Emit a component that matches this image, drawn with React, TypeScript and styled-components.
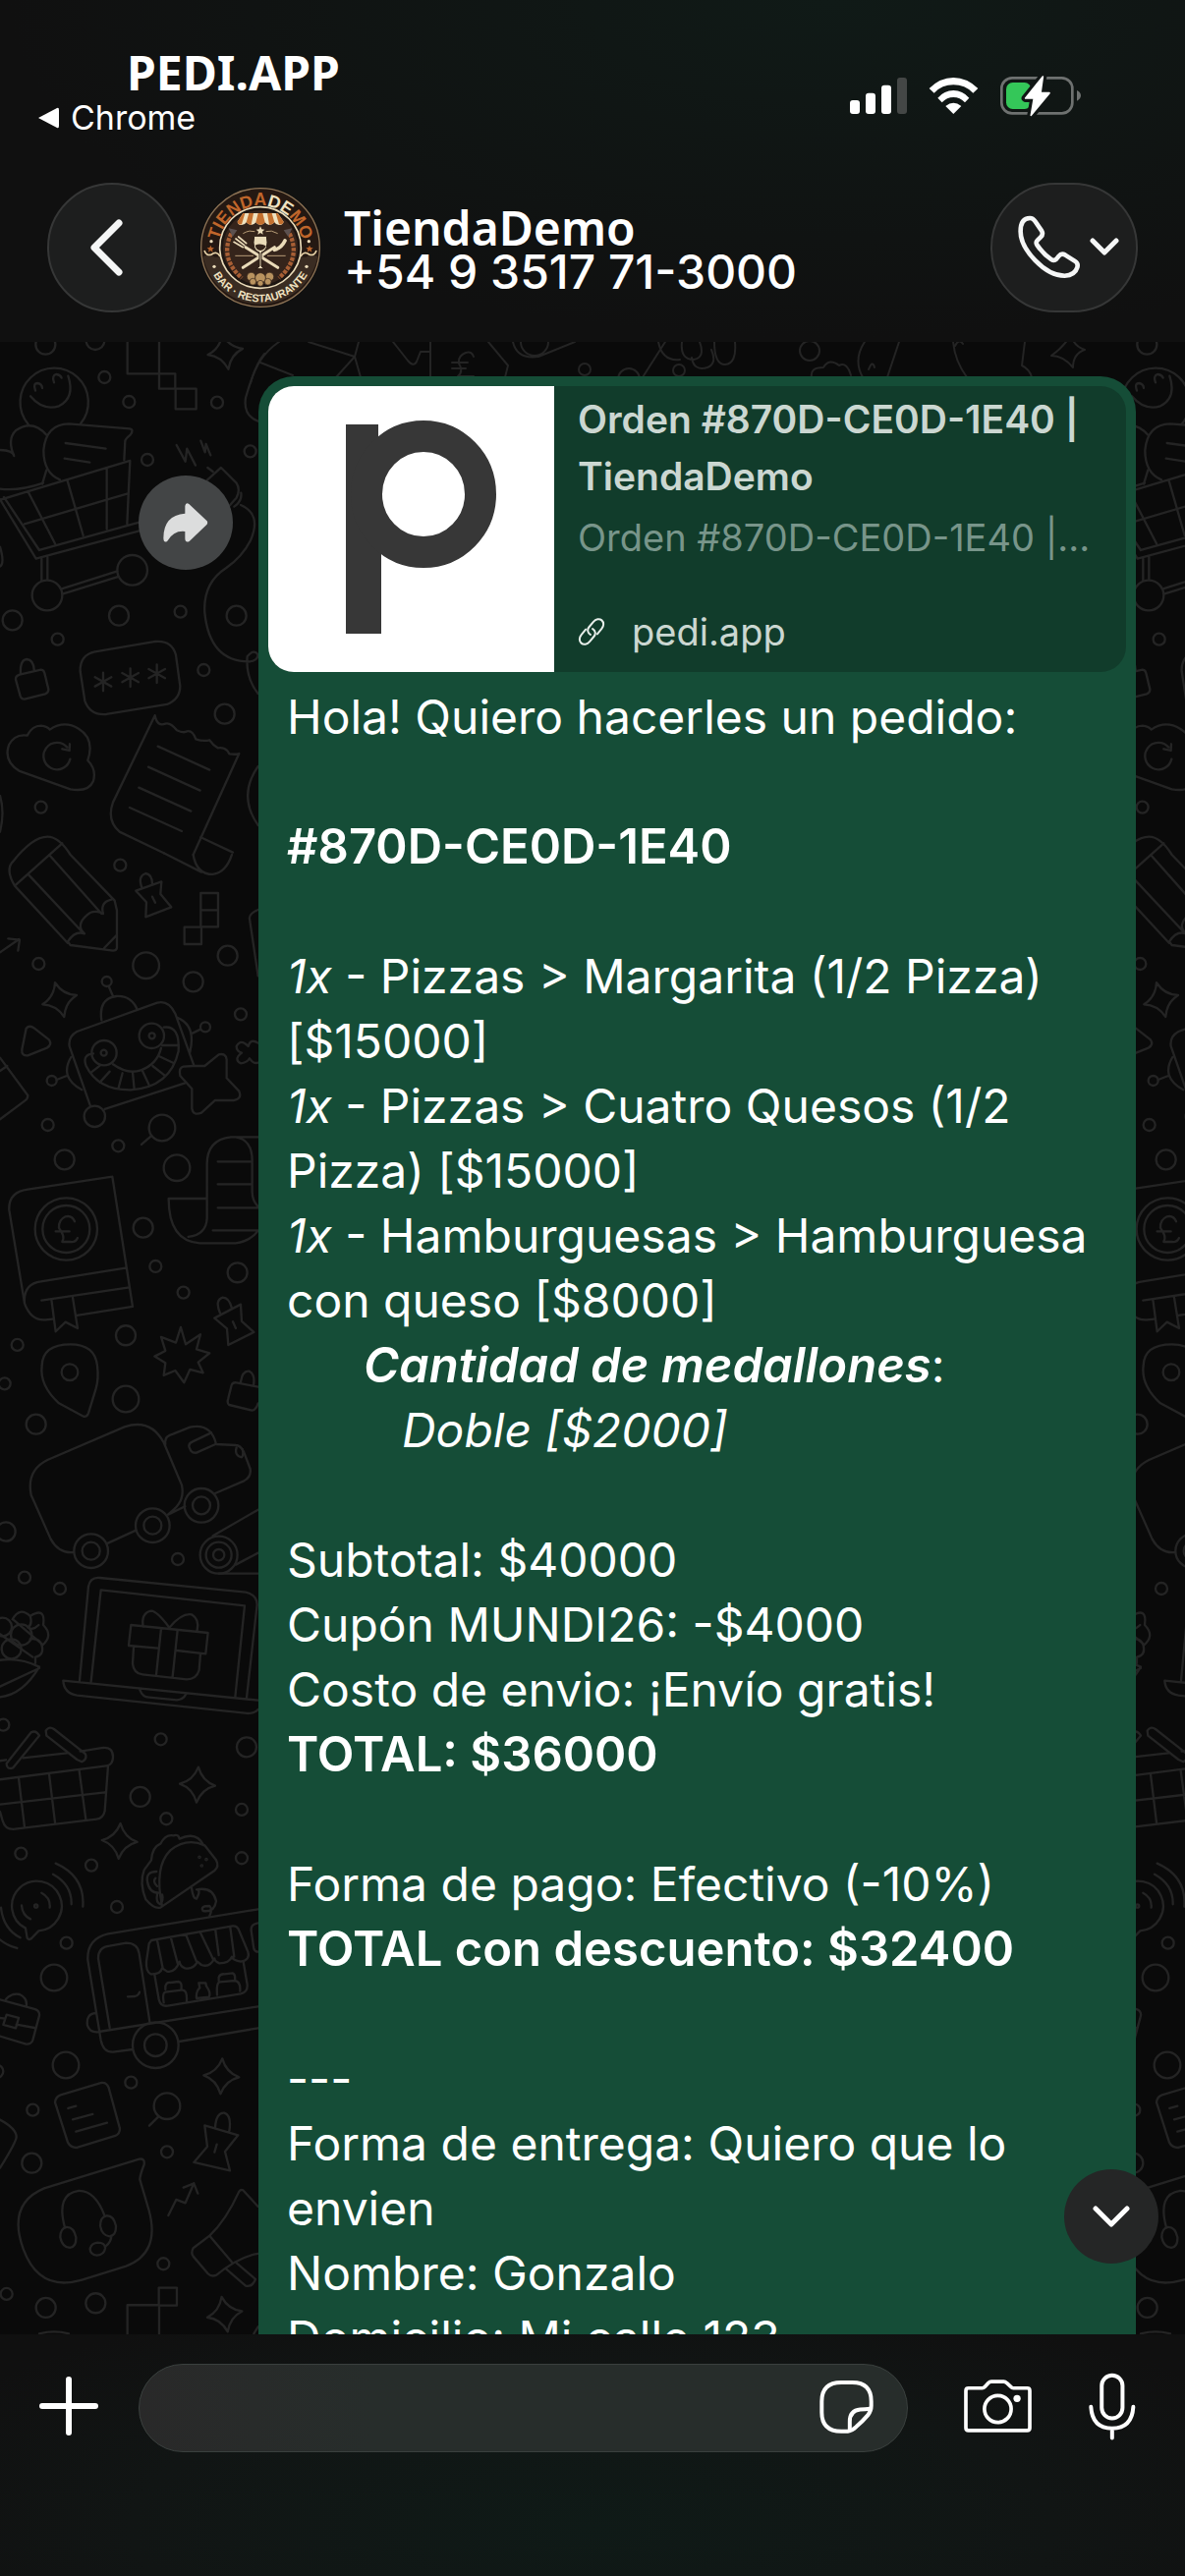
import React from "react";
import styled, { createGlobalStyle } from "styled-components";

const GlobalStyle = createGlobalStyle`
    *{
        box-sizing:border-box;
    }
    body{
        margin:0;
        background:#101111;
        font-family:Inter, "Liberation Sans", sans-serif;
        color:#fff;
    }
    button{
        border:0;
        padding:0;
        background:transparent;
        color:inherit;
        cursor:pointer;
        display:flex;
        align-items:center;
        justify-content:center;
        flex:none;
    }
    svg{
        display:block;
        flex:none;
    }
`;

type Circle = [number, number, number];
type Spot = [number, number, number];

interface DoodleBlock {
    top: number;
    circles: Circle[];
    sparkles: Spot[];
    paths: string[];
}

// line drawings of the chat wallpaper, three units to a pixel
const doodles: DoodleBlock[] = [
    {
        top: 2,
        circles: [
            [139, 2, 30], [291, -10, 28], [319, 102, 18], [394, 177, 18], [663, 179, 18], [764, 328, 18],
            [450, 354, 18], [38, 844, 30], [176, 902, 18], [363, 830, 30], [551, 818, 18], [722, 830, 30],
            [622, 996, 18], [686, 1130, 30], [125, 1415, 18], [144, 768, 46], [404, 691, 46],
        ],
        sparkles: [[688, 24, -10]],
        paths: [
            // stairs
            "M389-8V91H486V-8M486 91H535V137H486ZM536 137H599V199H536Z",
            // smiley
            "M86 245A104 104 0 1 1 246 244M93 160Q130 205 180 190Q230 165 208 98M108 143Q100 120 115 120Q128 122 129 135M165 118Q157 97 172 93Q185 95 188 104",
            // heart and note
            "M0 324Q40 325 43 342Q20 290 50 263Q100 230 142 278M0 443Q60 450 132 425M142 385L129 428",
            "M183 415Q133 395 133 325Q140 245 210 244L396 259Q410 262 398 278Q383 290 382 297L379 355M200 303L323 320M197 350L274 362",
            // shopping cart
            "M-5 478L397 357L388 550M12 468L120 630L425 545M0 475L110 656L425 571M85 450L168 610M206 418L254 585M326 380V565M75 550L390 457M127 655V722M145 652V720M188 748L358 694M193 763L362 711",
            // plug
            "M539 309L566 359L571 320L597 371M613 296L626 331L629 306L643 340",
            "M634 378L650 390M632 417L675 378L722 425Q735 445 722 470L700 495M736 455Q740 480 715 497M735 492Q800 520 765 600Q740 650 690 685Q620 730 625 820Q640 970 760 970Q785 970 788 950Q775 930 755 955Q750 1020 788 1068",
            // lock
            "M63 1008Q60 965 82 963Q102 965 104 995M60 1010L125 995Q133 995 136 1005L148 1055Q148 1065 138 1069L75 1085Q66 1086 62 1076L48 1025Q47 1014 60 1010Z",
            // password card
            "M290 940L475 909Q525 905 537 950L550 1045Q550 1085 510 1101L325 1131Q275 1135 259 1090L245 1000Q243 950 290 940Z",
            "M315 1004V1060M290 1018L340 1046M340 1018L290 1046M398 991V1047M373 1005L423 1033M423 1005L373 1033M479 979V1035M454 993L504 1021M504 993L454 1021",
            // cloud
            "M83 1196Q98 1166 125 1166Q145 1168 152 1178Q195 1148 240 1175Q290 1205 268 1272Q295 1300 285 1335Q270 1370 215 1360L60 1305Q10 1275 27 1225Q45 1190 83 1196ZM214 1268A41 41 0 1 1 205 1232M190 1237L212 1242L213 1222",
            // receipt
            "M473 1135L345 1400Q325 1455 365 1490L500 1555M473 1135Q480 1170 505 1160Q520 1155 540 1180Q560 1190 572 1183Q588 1180 598 1207Q620 1215 640 1210Q650 1225 665 1234Q690 1230 700 1252Q720 1255 730 1251L590 1560",
            "M482 1229L640 1301M453 1292L611 1364M424 1355L583 1427M396 1416L555 1488M613 1507L711 1553M500 1555L615 1613M590 1560Q600 1620 650 1620Q690 1615 708 1560",
            "M808 30Q780 60 750 165Q742 220 790 237M788 1290Q725 1380 788 1470M0 1380Q15 1430 0 1490M0 620Q15 670 0 680",
        ],
    },
    {
        top: 522,
        circles: [
            [367, 32, 18], [118, 333, 18], [446, 338, 40], [695, 308, 30], [590, 388, 30], [735, 487, 18],
            [326, 387, 15], [627, 526, 15], [158, 690, 15], [146, 825, 18], [361, 889, 18], [197, 931, 30],
            [495, 834, 40], [540, 956, 40], [437, 1139, 30], [475, 1257, 18], [560, 1337, 18], [725, 1276, 30],
            [384, 1468, 30], [53, 1497, 18], [289, 799, 32], [318, 605, 38], [463, 553, 38], [317, 605, 9],
            [464, 553, 9], [202, 1143, 95], [202, 1143, 72],
        ],
        sparkles: [[182, 443, -15]],
        paths: [
            // pencil
            "M45 95Q15 45 40 20Q100-55 145-55Q180-55 215 0L350 140L357 170V285Q355 293 345 293L215 276L207 265Q230 230 258 241Q230 215 265 185Q285 165 315 180Q305 145 340 137M207 270L45 95L190-35M88 62L255 240M150 0L310 180M318 285L357 245",
            "M0 298L58 258M25 256L60 260L55 293",
            // push pins
            "M415 110L493 82L490 120L523 160L445 190L447 145ZM433 100Q420 65 445 57Q465 60 465 90M465 128L474 146",
            "M655 1415L735 1373L738 1425L775 1458L697 1497L693 1447ZM672 1400Q655 1360 680 1352Q700 1352 708 1385M711 1426L720 1446",
            "M613 117H666V220H613ZM613 169H666M563 221H615V273H563Z",
            "M80 530Q90 518 105 530L150 565Q160 580 143 590L85 613Q65 615 67 595Z",
            "M0 620L85 735Q85 745 75 752L0 808M0 660L22 645",
            // robot
            "M275 765L212 585Q208 555 235 540L480 452Q515 443 535 485L592 643M320 777L565 697M310 505Q300 440 355 432Q400 430 418 470M345 432L332 402M540 497Q600 520 580 603M588 545L612 533M217 618Q180 680 250 718M204 675L173 687",
            "M285 607Q250 610 263 645Q300 720 400 718Q520 710 545 600Q550 520 500 527M345 640Q390 672 430 658Q480 640 492 590",
            "M278 665L306 643M305 695L335 662M362 712L374 667M410 716L405 664M455 703L435 660M503 674L466 645M530 636L485 615M545 582H495",
            // star and flower
            "M590 645L625 645L668 610Q690 605 692 625V682L730 722Q740 745 715 750H657L615 788Q590 798 586 775V715L550 675Q545 650 560 647Z",
            "M788 575Q765 560 758 585Q735 560 722 585Q722 600 738 605Q712 625 735 637Q755 635 762 622Q775 640 788 635M432 885L463 858",
            // scroll
            "M788 862H705Q632 870 632 945V1110Q630 1160 575 1167M632 1050H515Q515 1180 610 1186H720Q765 1180 788 1148M720 862Q772 870 770 940V1030Q770 1055 788 1075M665 937H768M665 1006H768M665 1078H788M650 1147H788M788 168Q760 180 762 195L788 370",
            // book
            "M343 983L85 1022Q25 1030 28 1085L75 1370Q95 1425 140 1420L160 1418M343 983L405 1380L235 1407M75 1370Q70 1310 125 1303L383 1262M127 1361L395 1321M157 1358L170 1456L200 1427L237 1446L222 1352",
            "M228 1120Q220 1100 200 1105Q178 1115 180 1140Q200 1165 190 1182H215Q230 1185 237 1170M170 1150H212",
            // burst
            "M552 1443L567 1495L612 1465L600 1510L640 1522L605 1550L620 1582L580 1572L562 1612L535 1575L500 1590L505 1552L472 1532L505 1515L492 1473L537 1490Z",
        ],
    },
    {
        top: 1042,
        circles: [
            [14, 55, 18], [384, 102, 40], [110, 179, 30], [18, 507, 29], [75, 647, 18], [183, 681, 18],
            [543, 591, 18], [491, 1141, 18], [753, 1165, 30], [428, 1317, 30], [508, 1384, 18], [738, 1356, 18],
            [64, 1490, 18], [279, 1526, 18], [738, 1504, 18], [10, 1097, 18], [278, 566, 52], [278, 566, 27],
            [466, 488, 52], [466, 488, 27], [615, 427, 52], [615, 427, 27], [668, 578, 57], [668, 578, 39],
            [668, 578, 17], [213, 20, 25], [65, 822, 32], [35, 865, 30], [8, 798, 28],
        ],
        sparkles: [[603, 1280, 3], [365, 1452, 3]],
        paths: [
            // map pin
            "M128 0Q130-65 215-65Q290-65 297 0Q302 40 293 70L270 145Q265 158 255 155L180 115Q120 60 128 0Z",
            "M700 120Q692 115 697 100L707 60Q710 50 722 52L788 65M700 120L770 137Q782 135 788 115M735 50Q740 15 760 17Q780 25 774 62",
            // van
            "M225 570Q180 575 155 530L95 395Q80 320 145 288L380 187Q460 160 500 235L555 365Q565 410 530 440L513 455M505 240Q500 215 530 208L580 188Q645 175 660 240L720 243Q735 243 745 265L764 315Q768 340 745 352L657 390M330 542L415 503M513 455L565 430",
            "M645 205L588 232Q574 238 578 250L583 260Q590 268 600 266L658 240M722 250Q715 275 738 280Q745 272 740 255M650 520L788 440M720 608L788 572M668 635H788",
            // laptop with a gift
            "M243 962L270 675Q275 645 305 648L750 692Q785 700 785 730L753 1015M278 965L308 685L747 733L718 1013M788 1022L193 962Q195 1000 235 1007L755 1062Q780 1062 788 1050M427 990Q435 1013 455 1013L540 1021Q560 1020 568 1003",
            "M540 870L628 880L635 816L400 792L393 855L483 863M408 860L405 910Q408 940 435 943L570 958Q600 958 608 930L612 880M492 803L477 945M542 808L527 950M517 800Q480 750 462 749Q430 755 437 797M517 800Q555 755 585 760Q610 775 602 808",
            // corn
            "M38 775Q60 735 92 765Q140 735 132 792Q165 825 128 855Q135 885 108 890V908M92 765Q100 790 85 800Q100 810 118 792M128 855Q120 830 92 835M-5 900Q60 890 120 920Q70 1005 0 1012M0 980L120 924M0 820L100 890M40 775L128 850",
            // basket
            "M20 1215L95 1120Q110 1112 120 1130L40 1228Q20 1235 20 1215ZM140 1115Q150 1100 165 1110L260 1185Q268 1200 250 1210L235 1203L142 1130Z",
            "M0 1207L18 1204M70 1198L205 1183M245 1178L315 1167Q345 1165 345 1195Q345 1220 325 1222L0 1264M330 1222L320 1360Q315 1383 295 1385L40 1416Q15 1416 8 1390L0 1362M0 1340L320 1303M57 1260L75 1410M150 1248L168 1395M242 1237L262 1385",
        ],
    },
    {
        top: 1532,
        circles: [
            [357, 183, 18], [203, 293, 18], [165, 399, 40], [201, 666, 40], [400, 719, 18], [100, 803, 18],
            [97, 965, 30], [510, 791, 40], [510, 931, 18], [499, 1273, 18], [20, 1365, 18], [140, 1407, 30],
            [292, 1393, 30], [475, 605, 70], [475, 605, 34], [-10, 685, 20], [110, 180, 5], [609, 31, 2],
            [630, 38, 2], [616, 57, 2],
        ],
        sparkles: [[676, 700, 3], [686, 1427, -10]],
        paths: [
            // taco
            "M495 180Q470 60 520 10Q570-30 625-5L660 40Q670 60 655 72L490 185Q470 190 445 160Q425 110 440 70L462 40Q465 0 490-10Q505-40 530-35Q545-40 548-25Q600-50 622-5M478 75Q445 75 450 105Q455 140 485 140M475 95Q465 105 480 120M480 145Q475 170 490 175Q500 160 495 145",
            "M585 125Q590 160 600 158Q615 130 600 130Q650 120 660 165Q655 200 620 195Q610 180 640 180Q650 190 640 210",
            // ringing call
            "M78 248A76 76 0 1 1 118 256L95 280Q88 285 83 278ZM66 178Q68 208 93 220M127 140Q155 155 152 185M162 83Q220 115 218 175M170 50Q260 90 253 182M3 185Q10 250 62 277M0 283Q20 300 52 309",
            // food truck
            "M788 190L330 265Q265 280 268 345L308 590Q315 627 345 626L405 618M547 594L788 553M302 564L788 487M335 552L300 340Q300 305 335 302L385 293Q420 293 425 325L457 533M390 457L412 456Q424 452 426 443M292 507Q262 510 267 545Q275 568 300 565",
            "M462 285L710 241Q725 240 730 255L757 320Q765 345 735 350Q710 345 708 335Q700 355 670 355Q655 350 655 340Q640 370 615 360L603 350Q590 375 565 370Q550 365 548 350Q535 385 510 380L495 370Q490 390 460 388Q445 380 447 350L455 295ZM480 285L497 370M522 278L543 358M568 268L600 350M612 262L652 345M658 255L668 330M703 245L715 335",
            "M472 390L485 465Q490 488 512 485L735 448Q757 443 755 420L743 350M505 435V425Q508 412 520 414L545 411Q557 412 553 437L505 443Q495 445 500 475M555 437Q572 435 570 470M607 415H628L630 425Q645 445 638 458L600 462Q598 440 610 430ZM668 408V398Q672 387 685 388L710 385Q720 388 717 408L672 412Q660 412 663 452M717 408Q735 410 733 440M788 232Q765 235 767 255L775 310Q778 320 788 320",
            // briefcase
            "M0 466L105 495Q122 500 120 515L100 590Q95 603 80 602L0 578M18 465Q35 445 60 450Q85 462 80 487M0 522L15 524M50 542L105 552M20 512L57 522L48 553L10 543Z",
            // note
            "M185 757L310 720Q325 718 332 735L366 860Q366 875 352 882L235 918Q215 918 207 902L168 780Q170 762 185 757ZM208 798L232 791M222 832L283 816M232 869L327 842M456 851L484 823",
            "M625 850L727 880L687 930L702 988L592 963L633 915ZM657 857Q660 810 685 812Q708 820 700 868M662 908L655 932M0 833Q50 860 50 885Q50 900 0 980",
            // headset bubble
            "M135 1042L425 953Q443 950 440 970Q428 1000 427 1015L455 1110Q490 1240 385 1280L250 1322Q120 1360 72 1230Q20 1090 135 1042ZM198 1162Q170 1060 240 1050Q290 1048 320 1127M340 1187Q340 1205 322 1220",
            "M203 1161Q225 1160 232 1192Q233 1222 213 1224Q190 1222 184 1192Q184 1165 203 1161ZM325 1126Q347 1125 354 1157Q355 1187 335 1189Q312 1187 306 1157Q306 1130 325 1126ZM298 1208Q322 1208 321 1226Q318 1245 296 1247Q275 1245 275 1228Q278 1210 298 1208Z",
            "M514 1125L538 1077L566 1087L592 1027M560 1040L592 1027L604 1058",
            // megaphone
            "M788 1098L742 1048Q735 1045 730 1052Q690 1140 640 1187L590 1225Q582 1240 590 1250L635 1303Q645 1313 660 1308Q730 1250 788 1242M640 1187L708 1268M692 1290L750 1340Q770 1345 780 1320L722 1270",
            "M485 1346H540V1400H485ZM389 1490V1399H486V1490M120 1486Q165 1475 210 1486M775 1486L788 1465",
        ],
    },
];

// the row that shows between the header and the bubble, in pixels
const topRow =
    "M284 0Q262 15 255 42M265 21L298 34M314 0L361 15L365 0M342 36L361 15L367 36M400 0L415 19Q421 26 424 20L428 10H438M438 0V36M482 15Q480 9 474 11Q466 14 467 22Q472 30 466 35H482M460 21H476M460 27H474M497 0L517 24L514 36M530 0A14 14 0 0 0 558 0M522 0Q526 18 548 15L585 0M677 0L654 36M670 0Q674 20 692 18M694 0Q692 18 706 18Q718 16 712 0M704 16Q706 30 720 26Q730 22 724 8M727 0Q727 23 738 23Q750 22 748 0M826 36Q824 26 838 26Q844 16 854 24Q862 20 866 34M880 0Q868 18 878 36M884 28Q888 18 890 26M915 0L903 36M972 4Q976 -4 980 2M970 0Q972 20 984 36M1043 0L1040 24Q1048 28 1050 36";

const Wallpaper: React.FC = () => (
    <Backdrop aria-hidden="true">
        <defs>
            <g id="strip" fill="none" stroke="#242424" strokeWidth="7" strokeLinecap="round" strokeLinejoin="round">
                {doodles.map((block) => (
                    <g key={block.top} transform={`translate(0 ${block.top}) scale(0.3333)`}>
                        {block.circles.map(([x, y, r]) => (
                            <circle key={`${x}-${y}-${r}`} cx={x} cy={y} r={r} />
                        ))}
                        {block.sparkles.map(([x, y, turn]) => (
                            <path
                                key={`${x}-${y}`}
                                transform={`translate(${x} ${y}) rotate(${turn})`}
                                d="M0-54Q14-12 54 0Q14 12 0 54Q-14 12-54 0Q-14-12 0-54Z"
                            />
                        ))}
                        {block.paths.map((d) => (
                            <path key={d} d={d} />
                        ))}
                    </g>
                ))}
            </g>
        </defs>
        <use href="#strip" />
        <use href="#strip" x="1121" />
        <g fill="none" stroke="#242424" strokeWidth="2" strokeLinecap="round" strokeLinejoin="round">
            <path d={topRow} />
            <path d="M1090-8Q1092 4 1104 8Q1092 12 1092 26Q1082 14 1070 14Q1084 4 1090-8Z" />
            <circle cx="595" cy="28" r="6" />
            <circle cx="640" cy="38" r="11" />
            <circle cx="691" cy="29" r="6" />
            <circle cx="824" cy="9" r="10" />
        </g>
    </Backdrop>
);

const StoreLogo: React.FC = () => (
    <svg width="122" height="122" viewBox="74 60 366 366" role="img" aria-label="TiendaDemo">
        <defs>
            <path id="arcTop" d="M98 290A131 131 0 1 1 416 290" />
            <path id="arcBottom" d="M91 243A166 166 0 0 0 423 243" />
        </defs>
        <circle cx="257" cy="243" r="181" fill="#241812" stroke="#8d7355" strokeWidth="4" />
        <path d="M82 270Q105 262 118 272H396Q410 262 432 270A178 178 0 0 1 82 270Z" fill="#3a2c22" />
        <path d="M86 252Q92 270 108 264Q124 252 134 270M428 252Q422 270 406 264Q390 252 380 270" fill="none" stroke="#e8d3a8" strokeWidth="5" />
        <circle cx="257" cy="243" r="124" fill="#1d1511" stroke="#eadbb9" strokeWidth="5" />
        <circle cx="257" cy="243" r="114" fill="#35241b" />
        <text fontFamily="Liberation Sans, sans-serif" fontWeight="700" fontSize="53" fill="#c0662b" textAnchor="middle">
            <textPath href="#arcUpper" startOffset="50%">
                TIENDA<tspan fill="#f0e2c0">DE</tspan>MO
            </textPath>
        </text>
        <path id="arcUpper" d="M133 275A128 128 0 1 1 381 275" fill="none" />
        <text fontFamily="Liberation Sans, sans-serif" fontWeight="700" fontSize="33" fill="#f0e2c0" textAnchor="middle">
            <textPath href="#arcBottom" startOffset="50%">BAR · RESTAURANTE</textPath>
        </text>
        <g fill="#eadbb9">
            <circle cx="107" cy="224" r="5" />
            <circle cx="405" cy="224" r="5" />
            <circle cx="116" cy="301" r="5" />
            <circle cx="398" cy="301" r="5" />
            <path d="M257 178L261 187L270 188L263 194L265 203L257 198L249 203L251 194L244 188L253 187Z" />
        </g>
        <g fill="#b9622a">
            <path d="M105 236L108 243L116 244L110 249L112 257L105 252L98 257L100 249L94 244L102 243Z" />
            <path d="M407 236L410 243L418 244L412 249L414 257L407 252L400 257L402 249L396 244L404 243Z" />
        </g>
        {/* awning */}
        <path d="M204 138H310L328 164Q326 174 314 174Q304 174 300 166Q294 174 284 174Q276 174 271 166Q266 174 257 174Q248 174 243 166Q238 174 229 174Q220 174 214 166Q210 174 200 174Q188 174 187 164Z" fill="#f0e2c0" />
        <path d="M222 138H236L229 174Q220 174 214 166ZM250 138H264L271 166Q266 174 257 174Q248 174 243 166ZM278 138H292L300 166Q294 174 284 174ZM204 138L187 164Q188 174 200 172L210 138ZM310 138L328 164Q326 174 314 172L304 138Z" fill="#c4702f" />
        {/* wheat */}
        <g fill="none" stroke="#a85f35" strokeWidth="13" strokeDasharray="11 4">
            <path d="M168 200Q132 275 200 336" />
            <path d="M346 200Q382 275 314 336" />
        </g>
        <path d="M160 184L186 190L172 210ZM354 184L328 190L342 210Z" fill="#5c5150" />
        <path d="M204 200Q225 188 240 194M310 200Q290 188 274 194M180 268H236M334 268H278" fill="none" stroke="#b79c77" strokeWidth="3" />
        {/* cutlery and glass */}
        <g stroke="#eadbb9" strokeLinecap="round" fill="none">
            <path d="M212 242L310 304" strokeWidth="9" />
            <path d="M300 242L204 304" strokeWidth="9" />
            <path d="M182 216L208 236M190 210L214 230M176 226L204 242" strokeWidth="5" />
            <path d="M332 222Q322 244 300 250" strokeWidth="11" />
        </g>
        <path d="M238 208H276Q284 252 260 258V300Q262 305 272 308H242Q252 305 254 300V258Q230 252 238 208Z" fill="#eadbb9" stroke="#2a1c14" strokeWidth="3" />
        <path d="M241 236Q257 228 274 238Q270 250 257 252Q244 250 241 236Z" fill="#35241b" />
        <g fill="#b9935f" stroke="#35241b" strokeWidth="2">
            <circle cx="229" cy="332" r="13" />
            <circle cx="285" cy="332" r="13" />
            <circle cx="257" cy="336" r="16" />
            <circle cx="234" cy="347" r="10" />
            <circle cx="280" cy="347" r="10" />
            <circle cx="257" cy="352" r="9" />
        </g>
    </svg>
);

const App: React.FC = () => {
    return (
        <Screen>
            <GlobalStyle />
            <Top>
                <StatusBar>
                    <div>
                        <Carrier>PEDI.APP</Carrier>
                        <BackLink href="#chrome">
                            <svg width="22" height="22" viewBox="0 0 22 22" fill="#fff">
                                <path d="M1 11L20 1Q22 0 22 3V19Q22 22 20 21Z" />
                            </svg>
                            Chrome
                        </BackLink>
                    </div>
                    <Signals>
                        <svg width="58" height="43" viewBox="45 78 174 129" fill="#fff">
                            <rect x="45" y="156" width="30" height="42" rx="9" />
                            <rect x="93" y="134" width="30" height="64" rx="9" />
                            <rect x="141" y="110" width="30" height="88" rx="9" />
                            <rect x="189" y="87" width="30" height="111" rx="9" fill="#444746" />
                        </svg>
                        <svg width="51" height="43" viewBox="285 78 153 129" fill="#fff">
                            <path d="M287 120Q320 87 361 87Q402 87 436 120L421 134Q396 109 361 109Q326 109 302 134Z" />
                            <path d="M313 149Q333 126 361 126Q389 126 409 149L396 163Q381 147 361 147Q341 147 326 163Z" />
                            <path d="M337 174Q361 154 385 174L361 198Z" />
                        </svg>
                        <svg width="83" height="43" viewBox="504 78 249 129">
                            <rect x="508" y="88" width="216" height="108" rx="32" fill="none" stroke="#6e7170" strokeWidth="8" />
                            <rect x="522" y="102" width="76" height="81" rx="20" fill="#34c759" />
                            <path d="M738 126Q750 132 750 142Q750 152 738 158Z" fill="#6e7170" />
                            <path d="M634 84L581 150H607L598 202L654 134H627Z" fill="#111615" stroke="#111615" strokeWidth="24" strokeLinejoin="round" />
                            <path d="M634 84L581 150H607L598 202L654 134H627Z" fill="#fff" stroke="#fff" strokeWidth="5" strokeLinejoin="round" />
                        </svg>
                    </Signals>
                </StatusBar>
                <ChatBar>
                    <RoundButton aria-label="Volver">
                        <svg width="44" height="60" viewBox="0 0 44 60" fill="none" stroke="#f5f6f6" strokeWidth="7" strokeLinecap="round" strokeLinejoin="round">
                            <path d="M29 5L4 30L29 55" />
                        </svg>
                    </RoundButton>
                    <StoreLogo />
                    <Contact>
                        <h1>TiendaDemo</h1>
                        <p>+54 9 3517 71-3000</p>
                    </Contact>
                    <CallButton aria-label="Llamar">
                        <svg width="66" height="66" viewBox="555 510 200 200" fill="none" stroke="#f5f6f6" strokeWidth="14" strokeLinejoin="round">
                            <path d="M566 560C566 530 578 519 595 519C603 519 607 523 611 529L631 558C635 565 634 572 628 578L618 588C614 592 613 596 617 602C630 621 645 636 660 646C666 650 672 650 676 646L684 636C689 630 697 629 704 633L734 652C742 657 743 664 741 671C736 688 722 696 702 697C640 697 566 615 566 560Z" />
                        </svg>
                        <svg width="30" height="20" viewBox="0 0 30 20" fill="none" stroke="#f5f6f6" strokeWidth="5" strokeLinecap="round" strokeLinejoin="round">
                            <path d="M3 3L15 15L27 3" />
                        </svg>
                    </CallButton>
                </ChatBar>
            </Top>

            <Chat>
                <Wallpaper />
                <MessageRow>
                    <ForwardButton aria-label="Reenviar">
                        <svg width="48" height="42" viewBox="494 480 144 126" fill="#dcdddd">
                            <path d="M576 486L631 538Q634 543 631 548L577 600Q565 606 564 592V570Q530 566 510 599Q499 607 498 590Q498 520 564 515V492Q566 480 576 486Z" />
                        </svg>
                    </ForwardButton>
                    <Bubble>
                        <Preview href="#orden">
                            <svg width="291" height="291" viewBox="0 0 291 291" role="img" aria-label="Pedi">
                                <rect width="291" height="291" fill="#fff" />
                                <rect x="79" y="39" width="33" height="60" fill="#373737" />
                                <rect x="79" y="90" width="36" height="162" fill="#373737" />
                                <ellipse cx="158" cy="110" rx="58" ry="59" fill="none" stroke="#373737" strokeWidth="32" />
                            </svg>
                            <PreviewText>
                                <h2>Orden #870D-CE0D-1E40 | TiendaDemo</h2>
                                <p>Orden #870D-CE0D-1E40 |...</p>
                                <div className="site">
                                    <svg width="28" height="28" viewBox="0 0 28 28" fill="none" stroke="#e8efeb" strokeWidth="2" strokeLinecap="round">
                                        <g transform="rotate(-50 14 14)">
                                            <path d="M12 8H5A6 5 0 0 0 5 19H12A5 5 0 0 0 17 13" />
                                            <path d="M16 20H23A6 5 0 0 0 23 9H16A5 5 0 0 0 11 15" />
                                        </g>
                                    </svg>
                                    pedi.app
                                </div>
                            </PreviewText>
                        </Preview>
                        <Message>
                            <p>Hola! Quiero hacerles un pedido:</p>
                            <br />
                            <p><b>#870D-CE0D-1E40</b></p>
                            <br />
                            <p><i>1x</i> - Pizzas &gt; Margarita (1/2 Pizza) [$15000]</p>
                            <p><i>1x</i> - Pizzas &gt; Cuatro Quesos (1/2 Pizza) [$15000]</p>
                            <p><i>1x</i> - Hamburguesas &gt; Hamburguesa con queso [$8000]</p>
                            <Indented $level={2}><b><i>Cantidad de medallones</i></b>:</Indented>
                            <Indented $level={3}><i>Doble [$2000]</i></Indented>
                            <br />
                            <p>Subtotal: $40000</p>
                            <p>Cupón MUNDI26: -$4000</p>
                            <p>Costo de envio: ¡Envío gratis!</p>
                            <p><b>TOTAL: $36000</b></p>
                            <br />
                            <p>Forma de pago: Efectivo (-10%)</p>
                            <p><b>TOTAL con descuento: $32400</b></p>
                            <br />
                            <p>---</p>
                            <p>Forma de entrega: Quiero que lo envien</p>
                            <p>Nombre: Gonzalo</p>
                            <p>Domicilio: Mi calle 123</p>
                        </Message>
                    </Bubble>
                </MessageRow>
                <ScrollDown aria-label="Ir al final">
                    <svg width="38" height="24" viewBox="0 0 38 24" fill="none" stroke="#fff" strokeWidth="5" strokeLinecap="round" strokeLinejoin="round">
                        <path d="M3 4L19 20L35 4" />
                    </svg>
                </ScrollDown>
            </Chat>

            <Composer>
                <button aria-label="Adjuntar">
                    <svg width="60" height="60" viewBox="0 0 60 60" stroke="#fff" strokeWidth="6" strokeLinecap="round">
                        <path d="M30 3V57M3 30H57" />
                    </svg>
                </button>
                <InputBox>
                    <input type="text" aria-label="Mensaje" />
                    <button aria-label="Stickers">
                        <svg width="57" height="57" viewBox="98 664 172 172" fill="none" stroke="#fff" strokeWidth="12" strokeLinejoin="round">
                            <path d="M188 826H168Q108 826 108 768V734Q108 676 168 676H202Q260 676 260 734V748Q260 764 250 776Q232 797 214 812Q202 824 188 826Z" />
                            <path d="M258 757Q240 759 226 759Q194 762 194 796V825" />
                        </svg>
                    </button>
                </InputBox>
                <button aria-label="Cámara">
                    <svg width="69" height="58" viewBox="540 660 208 174" fill="none" stroke="#fff" strokeWidth="11" strokeLinejoin="round">
                        <path d="M546 700Q546 692 554 692H596Q601 692 604 688L615 676Q619 672 624 672H662Q667 672 671 676L684 688Q687 692 692 692H734Q742 692 742 700V814Q742 822 734 822H554Q546 822 546 814Z" />
                        <circle cx="644" cy="756" r="41" />
                        <circle cx="703" cy="724" r="11" fill="#fff" stroke="none" />
                    </svg>
                </button>
                <button aria-label="Mensaje de voz">
                    <svg width="49" height="71" viewBox="918 638 148 212" fill="none" stroke="#fff" strokeWidth="12" strokeLinecap="round">
                        <rect x="961" y="648" width="64" height="132" rx="32" />
                        <path d="M928 745Q932 811 993 811Q1054 811 1058 745M993 811V841" />
                    </svg>
                </button>
            </Composer>
        </Screen>
    );
};

const Screen = styled.div`
    height:100vh;
    display:flex;
    flex-direction:column;
    overflow:hidden;
`;

const Top = styled.header`
    background:radial-gradient(ellipse at 70% 0, #101a17 0, #101010 70%);
    padding-bottom:30px;
`;

const StatusBar = styled.div`
    display:flex;
    justify-content:space-between;
    align-items:flex-start;
    padding:46px 105px 48px 38px;
`;

const Carrier = styled.div`
    font-family:"Noto Sans", "Open Sans", sans-serif;
    font-size:48px;
    line-height:56px;
    font-weight:700;
    margin-left:91px;
`;

const BackLink = styled.a`
    display:flex;
    align-items:center;
    gap:12px;
    font-size:34px;
    line-height:36px;
    color:#fff;
    text-decoration:none;
`;

const Signals = styled.div`
    display:flex;
    gap:22px;
    margin-top:30px;
`;

const ChatBar = styled.div`
    display:flex;
    align-items:center;
    padding:0 48px;
    gap:24px;
`;

const RoundButton = styled.button`
    width:132px;
    height:132px;
    border-radius:66px;
    background:#1d1e1e;
    border:2px solid #363737;
`;

const CallButton = styled(RoundButton)`
    width:150px;
    gap:8px;
    padding-left:8px;
`;

const Contact = styled.div`
    flex:1;
    min-width:0;
    padding-top:5px;
    h1{
        font-family:"Noto Sans", "Open Sans", sans-serif;
        font-size:48px;
        line-height:44px;
        font-weight:600;
        margin:0;
    }
    p{
        margin:0;
        font-size:48px;
        line-height:46px;
        font-weight:500;
    }
`;

const Chat = styled.main`
    flex:1;
    min-height:0;
    position:relative;
    overflow:hidden;
    background:#0a0a0a;
`;

const Backdrop = styled.svg`
    position:absolute;
    top:0;
    left:0;
    width:100%;
    height:100%;
`;

const MessageRow = styled.div`
    position:relative;
    display:flex;
    align-items:flex-start;
    gap:26px;
    padding:35px 50px 0 141px;
`;

const ForwardButton = styled.button`
    width:96px;
    height:96px;
    border-radius:48px;
    background:#434546;
    margin-top:101px;
`;

const Bubble = styled.div`
    flex:1;
    min-width:0;
    background:#154d37;
    border-radius:36px;
    padding:10px 10px 60px;
`;

const Preview = styled.a`
    display:flex;
    background:#113c2b;
    border-radius:26px;
    overflow:hidden;
    color:#cbd7d1;
    text-decoration:none;
`;

const PreviewText = styled.div`
    flex:1;
    min-width:0;
    padding:5px 20px 12px 24px;
    font-size:38px;
    line-height:58px;
    display:flex;
    flex-direction:column;
    h2{
        margin:0;
        font-size:39px;
        font-weight:600;
    }
    p{
        margin:4px 0 0;
        color:#78958a;
        white-space:nowrap;
    }
    .site{
        display:flex;
        align-items:center;
        gap:27px;
        margin-top:auto;
    }
`;

const Message = styled.div`
    padding:13px 20px 0 19px;
    font-size:48px;
    line-height:66px;
    p{
        margin:0;
    }
    b{
        font-size:49px;
        font-weight:600;
    }
`;

const Indented = styled.p<{ $level: number }>`
    && {
        margin-left:${({ $level }) => $level * 39}px;
    }
`;

const ScrollDown = styled.button`
    position:absolute;
    right:27px;
    bottom:72px;
    width:96px;
    height:96px;
    border-radius:48px;
    background:#252626;
`;

const Composer = styled.footer`
    display:flex;
    align-items:center;
    padding:30px 50px 126px 40px;
    background:radial-gradient(ellipse at 50% 80%, #0f1a17 0, #111514 55%, #101010 90%);
    gap:57px;
    button{
        padding-bottom:4px;
    }
`;

const InputBox = styled.div`
    flex:1;
    min-width:0;
    height:90px;
    margin-left:-16px;
    display:flex;
    align-items:center;
    padding:0 33px 0 40px;
    border-radius:45px;
    border:1px solid #3a403e;
    background:linear-gradient(90deg, #292929 0, #272d2b 30%);
    input{
        flex:1;
        min-width:0;
        border:0;
        outline:0;
        background:transparent;
        color:#fff;
        font:inherit;
        font-size:48px;
    }
`;

export default App;
